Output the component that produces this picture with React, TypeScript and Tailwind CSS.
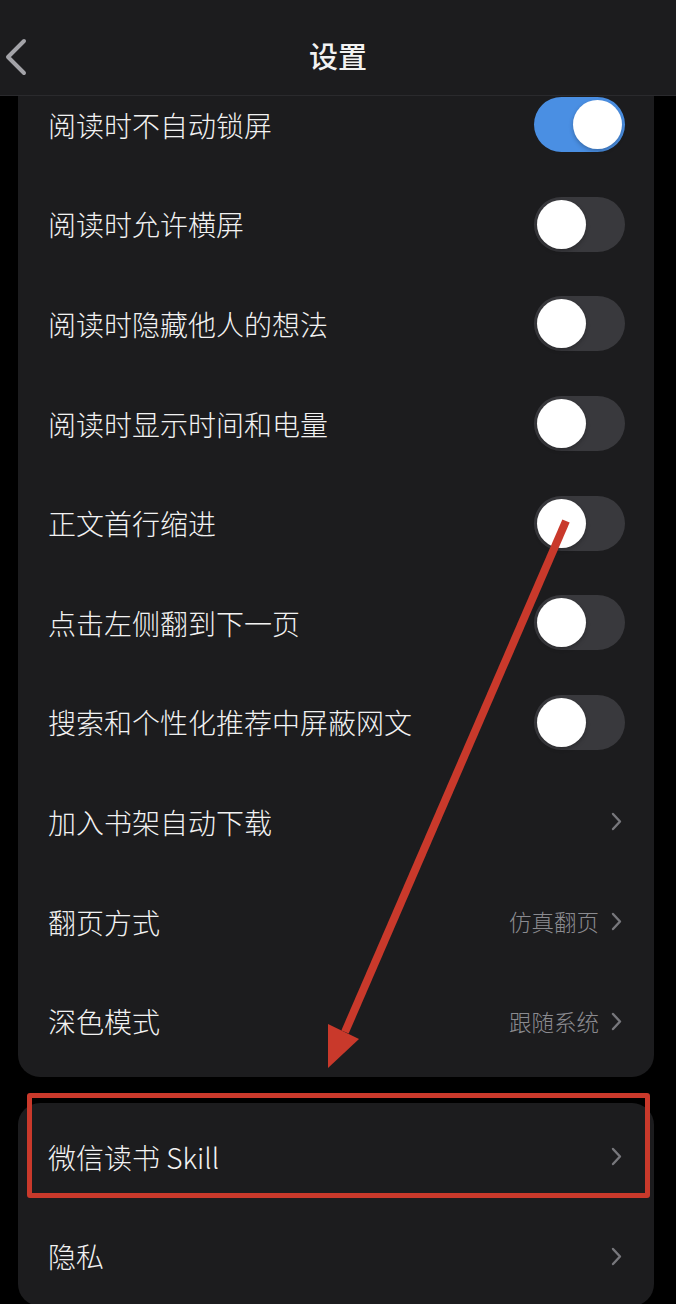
import React from 'react';

const FONT = "font-['Noto_Sans_CJK_SC','Noto_Sans',sans-serif]";

type Row =
  | { label: string; kind: 'toggle'; on: boolean }
  | { label: string; kind: 'link'; value?: string };

const mainRows: Row[] = [
  { label: '阅读时不自动锁屏', kind: 'toggle', on: true },
  { label: '阅读时允许横屏', kind: 'toggle', on: false },
  { label: '阅读时隐藏他人的想法', kind: 'toggle', on: false },
  { label: '阅读时显示时间和电量', kind: 'toggle', on: false },
  { label: '正文首行缩进', kind: 'toggle', on: false },
  { label: '点击左侧翻到下一页', kind: 'toggle', on: false },
  { label: '搜索和个性化推荐中屏蔽网文', kind: 'toggle', on: false },
  { label: '加入书架自动下载', kind: 'link' },
  { label: '翻页方式', kind: 'link', value: '仿真翻页' },
  { label: '深色模式', kind: 'link', value: '跟随系统' },
];

const moreRows: Row[] = [
  { label: '微信读书 Skill', kind: 'link' },
  { label: '隐私', kind: 'link' },
];

function Toggle({ on }: { on: boolean }) {
  return (
    <div
      className={`flex h-[55px] w-[91px] items-center rounded-full p-[3px] ${
        on ? 'justify-end bg-[#4a8fe3]' : 'justify-start bg-[#39393d]'
      }`}
    >
      <div className="h-[49px] w-[49px] rounded-full bg-white shadow-[0_2px_4px_rgba(0,0,0,0.25)]" />
    </div>
  );
}

function Chevron() {
  return (
    <svg width="11" height="19" viewBox="0 0 11 19" fill="none">
      <path d="M2 2l7 7.5L2 17" stroke="#77777c" strokeWidth="2.4" strokeLinecap="round" strokeLinejoin="round" />
    </svg>
  );
}

function SettingRow({ row }: { row: Row }) {
  return (
    <div className="flex h-[99.6px] items-center justify-between pl-[30px] pr-[29px]">
      <span className="text-[28px] font-light leading-none text-[#f2f2f2]">{row.label}</span>
      {row.kind === 'toggle' ? (
        <Toggle on={row.on} />
      ) : (
        <div className="flex items-center gap-[12px] pr-[3px]">
          {row.value && <span className="text-[22.5px] font-light leading-none text-[#8b8b90]">{row.value}</span>}
          <Chevron />
        </div>
      )}
    </div>
  );
}

export default function App() {
  return (
    <div className={`relative h-[1304px] w-[676px] overflow-hidden bg-black ${FONT}`}>
      {/* Nav bar */}
      <div className="absolute inset-x-0 top-0 z-10 flex h-[96px] items-center justify-center border-b border-[#2a2a2d] bg-[#1c1c1e]">
        <svg className="absolute left-[4px] top-[38px]" width="24" height="38" viewBox="0 0 24 38" fill="none">
          <path d="M20 3L4 19l16 16" stroke="#a3a3a8" strokeWidth="4" strokeLinecap="round" strokeLinejoin="round" />
        </svg>
        <span className="pt-[16px] text-[29px] font-medium leading-none text-[#f2f2f2]">设置</span>
      </div>

      {/* Content */}
      <div className="flex flex-col gap-[26px] pl-[18px] pr-[22px] pt-[75px]">
        <div className="rounded-[22px] bg-[#1c1c1e] pb-[6px]">
          {mainRows.map((r) => (
            <SettingRow key={r.label} row={r} />
          ))}
        </div>
        <div className="rounded-[22px] bg-[#1c1c1e] pt-[4px]">
          {moreRows.map((r) => (
            <SettingRow key={r.label} row={r} />
          ))}
        </div>
      </div>

      {/* Annotation arrow */}
      <svg className="pointer-events-none absolute left-0 top-0 z-20" width="676" height="1304" viewBox="0 0 676 1304">
        <line x1="566" y1="521" x2="345" y2="1032" stroke="#c9392b" strokeWidth="8" />
        <polygon points="328,1024 359,1039 328,1068" fill="#c9392b" />
      </svg>

      {/* Annotation box */}
      <div className="pointer-events-none absolute left-[27px] top-[1093px] z-20 h-[105px] w-[623px] rounded-[3px] border-[5px] border-[#c9392b]" />
    </div>
  );
}
